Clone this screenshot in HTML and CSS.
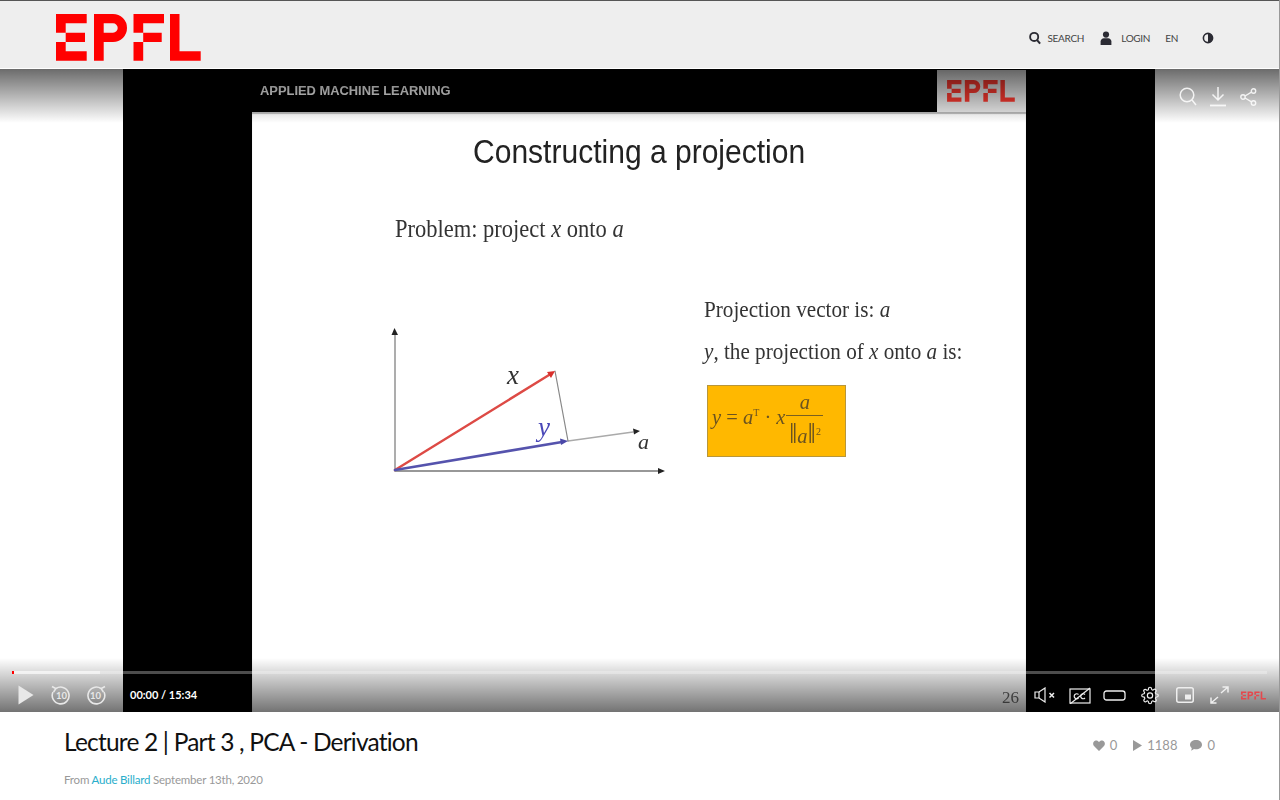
FILE: index.html
```html
<!DOCTYPE html>
<html lang="en">
<head>
    <meta charset="UTF-8">
    <meta name="viewport" content="width=device-width, initial-scale=1.0">
    <title>Lecture 2 | Part 3 , PCA - Derivation</title>
    <link rel="stylesheet" href="styles.css">
</head>
<body>
    <svg class="defs" width="0" height="0">
        <symbol id="epfl" viewBox="0 0 145 47">
            <path d="M0 0H30.7V9.3H9.7V18.7H0Z M9.7 18.7H29V28H9.7Z M0 28H9.7V37.3H30.7V46.7H0Z"/>
            <path fill-rule="evenodd" d="M38 0H57a14 14 0 0 1 0 28H47.7V46.7H38Z M47.7 9.3V18.7H57a4.7 4.7 0 0 0 0-9.4Z"/>
            <path d="M77.5 0H108V9.3H87.2V18.7H77.5Z M87.2 18.7H105.7V28H87.2Z M77.5 28H87.2V46.7H77.5Z"/>
            <path d="M114 0H123.5V37.3H144.7V46.7H114Z"/>
        </symbol>
    </svg>

    <div class="page">
        <header class="site-header">
            <svg class="site-logo"><use href="#epfl"/></svg>
            <nav class="site-nav">
                <a class="nav-item">
                    <svg class="nav-icon" viewBox="0 0 13 14"><circle cx="5.6" cy="5.8" r="4.4" fill="none" stroke="#2b2b33" stroke-width="2"/><path d="M8.8 9.2L12 13" stroke="#2b2b33" stroke-width="2.2" fill="none"/></svg>
                    SEARCH
                </a>
                <a class="nav-item nav-login">
                    <svg class="nav-icon" viewBox="0 0 12 14"><circle cx="6" cy="3.6" r="3.1" fill="#2b2b33"/><path d="M0.6 14V10.4C0.6 8.6 2.2 7.4 3.8 7.2H8.2C9.8 7.4 11.4 8.6 11.4 10.4V14Z" fill="#2b2b33"/></svg>
                    LOGIN
                </a>
                <a class="nav-item nav-lang">EN</a>
                <a class="nav-item nav-contrast">
                    <svg class="nav-icon" viewBox="0 0 12 12"><circle cx="6" cy="6" r="4.6" fill="#eee" stroke="#2b2b33" stroke-width="1.6"/><path d="M6 1.4A4.6 4.6 0 0 1 6 10.6Z" fill="#2b2b33"/></svg>
                </a>
            </nav>
        </header>

        <section class="player">
            <div class="video-frame">
                <div class="slide-strip-title">APPLIED MACHINE LEARNING</div>
                <div class="slide-strip-logo"><svg class="slide-logo"><use href="#epfl"/></svg></div>
                <div class="slide">
                    <h2 class="slide-title">Constructing a projection</h2>
                    <p class="slide-text slide-problem">Problem: project <i>x</i> onto <i>a</i></p>
                    <p class="slide-text slide-small slide-vector">Projection vector is: <i>a</i></p>
                    <p class="slide-text slide-small slide-proj"><i>y</i>, the projection of <i>x</i> onto <i>a</i> is:</p>
                    <div class="formula">
                        <span><i>y</i> = <i>a</i><sup>T</sup> &middot; <i>x</i></span>
                        <span class="fraction"><i class="frac-top">a</i><span class="frac-bottom"><span class="norm">&#8214;</span><i>a</i><span class="norm">&#8214;</span><sup>2</sup></span></span>
                    </div>
                    <svg class="diagram" viewBox="370 290 310 200">
                        <g fill="none" stroke-linecap="round">
                            <path d="M395 470V332" stroke="#999" stroke-width="1.6"/>
                            <path d="M395 471H659" stroke="#777" stroke-width="1.5"/>
                            <path d="M568 441L633 432" stroke="#aaa" stroke-width="1.5"/>
                            <path d="M555 371L568 441" stroke="#888" stroke-width="1.2"/>
                            <path d="M395 470L549 375" stroke="#dd4a45" stroke-width="2.4"/>
                            <path d="M395 470L562 442" stroke="#5553ad" stroke-width="2.6"/>
                        </g>
                        <path d="M394.5 328L391.5 335H398Z" fill="#222"/>
                        <path d="M665 471L658 468V474Z" fill="#222"/>
                        <path d="M640 431L633 428.5L634 434.5Z" fill="#222"/>
                        <path d="M555 371L547 372L551 378Z" fill="#d8302c"/>
                        <path d="M568 441L560 438.5L561 445Z" fill="#4a48a8"/>
                        <text class="diagram-label" x="507" y="384">x</text>
                        <text class="diagram-label diagram-blue" x="538" y="436">y</text>
                        <text class="diagram-label diagram-small" x="638" y="449">a</text>
                    </svg>
                    <span class="slide-number">26</span>
                </div>
            </div>

            <div class="shade shade-top"></div>
            <div class="shade shade-bottom"></div>

            <div class="player-top">
                <span class="ctrl">
                    <svg width="18" height="19" viewBox="0 0 18 19"><circle cx="8" cy="8" r="6.8" fill="none" stroke="#fff" stroke-width="1.5"/><path d="M13 13L17 18" stroke="#fff" stroke-width="1.5"/></svg>
                </span>
                <span class="ctrl">
                    <svg width="18" height="21" viewBox="0 0 18 21" fill="none" stroke="#fff" stroke-width="1.5"><path d="M9 1V14M3.5 8.5L9 14L14.5 8.5"/><path d="M1 19.5H17" stroke-width="1.8"/></svg>
                </span>
                <span class="ctrl">
                    <svg width="17" height="18" viewBox="0 0 17 18" fill="none" stroke="#fff" stroke-width="1.4"><circle cx="13.5" cy="3" r="2.2"/><circle cx="3" cy="9" r="2.2"/><circle cx="13.5" cy="15" r="2.2"/><path d="M5 8L11.5 4.1M5 10L11.5 13.9"/></svg>
                </span>
            </div>

            <div class="player-bar">
                <div class="progress">
                    <div class="progress-loaded"></div>
                    <div class="progress-played"></div>
                </div>
                <div class="controls">
                    <span class="ctrl">
                        <svg width="16" height="20" viewBox="0 0 16 20"><path d="M0.5 0.5L15.5 10L0.5 19.5Z" fill="#e8e8e8"/></svg>
                    </span>
                    <span class="ctrl">
                        <svg width="20" height="20" viewBox="0 0 20 20" fill="none" stroke="#e8e8e8" stroke-width="1.6"><path d="M5 3.5A8.4 8.4 0 1 1 2 7"/><path d="M1 1.5L4.8 3.6L2.6 7"/><text class="seek-label" x="10.5" y="13.5">10</text></svg>
                    </span>
                    <span class="ctrl">
                        <svg width="20" height="20" viewBox="0 0 20 20" fill="none" stroke="#e8e8e8" stroke-width="1.6"><path d="M15 3.5A8.4 8.4 0 1 0 18 7"/><path d="M19 1.5L15.2 3.6L17.4 7"/><text class="seek-label" x="9.5" y="13.5">10</text></svg>
                    </span>
                    <span class="time">00:00 / 15:34</span>
                    <span class="controls-right">
                        <span class="ctrl">
                            <svg width="22" height="16" viewBox="0 0 22 16" fill="none" stroke="#eee" stroke-width="1.2"><path d="M1 5H5L11 1V15L5 11H1Z"/><path d="M5 5V11"/><path d="M15.5 6L20 10.5M20 6L15.5 10.5" stroke-width="1.5"/></svg>
                        </span>
                        <span class="ctrl">
                            <svg width="22" height="17" viewBox="0 0 22 17" fill="none" stroke="#eee" stroke-width="1.2"><rect x="1" y="2" width="20" height="14"/><path d="M1 17L21 1"/><path d="M9.5 7.5A2.5 2.5 0 1 0 9.5 11M16 7.5A2.5 2.5 0 1 0 16 11"/></svg>
                        </span>
                        <span class="ctrl">
                            <svg width="23" height="11" viewBox="0 0 23 11" fill="none" stroke="#eee" stroke-width="1.3"><rect x="1" y="1" width="21" height="9" rx="2.5"/></svg>
                        </span>
                        <span class="ctrl">
                            <svg width="18" height="19" viewBox="0 0 24 24" fill="none" stroke="#eee" stroke-width="1.6"><circle cx="12" cy="12" r="3.5"/><path d="M19.4 15a1.65 1.65 0 0 0 .33 1.82l.06.06a2 2 0 1 1-2.83 2.83l-.06-.06a1.65 1.65 0 0 0-2.82 1.17V21a2 2 0 1 1-4 0v-.09a1.65 1.65 0 0 0-2.82-1.17l-.06.06a2 2 0 1 1-2.83-2.83l.06-.06A1.65 1.65 0 0 0 3.09 14H3a2 2 0 1 1 0-4h.09a1.65 1.65 0 0 0 1.17-2.82l-.06-.06a2 2 0 1 1 2.83-2.83l.06.06A1.65 1.65 0 0 0 10 3.09V3a2 2 0 1 1 4 0v.09a1.65 1.65 0 0 0 2.82 1.17l.06-.06a2 2 0 1 1 2.83 2.83l-.06.06A1.65 1.65 0 0 0 20.91 10H21a2 2 0 1 1 0 4h-.09a1.65 1.65 0 0 0-1.51 1Z"/></svg>
                        </span>
                        <span class="ctrl">
                            <svg width="18" height="16" viewBox="0 0 18 16"><rect x="0.75" y="0.75" width="16.5" height="14.5" rx="2" fill="none" stroke="#eee" stroke-width="1.5"/><rect x="9" y="7.5" width="6" height="5" fill="#eee"/></svg>
                        </span>
                        <span class="ctrl">
                            <svg width="19" height="18" viewBox="0 0 19 18" fill="none" stroke="#eee" stroke-width="1.5"><path d="M11 7L18 1M12.5 1H18V6.5"/><path d="M8 11L1 17M1 11.5V17H6.5"/></svg>
                        </span>
                        <svg class="bar-logo"><use href="#epfl"/></svg>
                    </span>
                </div>
            </div>
        </section>

        <section class="video-info">
            <div class="info-main">
                <h1 class="video-title">Lecture 2 | Part 3 , PCA - Derivation</h1>
                <p class="video-meta">From <a class="author">Aude Billard</a> September 13th, 2020</p>
            </div>
            <ul class="stats">
                <li class="stat stat-likes">
                    <svg width="12" height="11" viewBox="0 0 12 11"><path d="M6 11L1 6C-0.5 4.3 0 1.5 2 0.7C3.5 0 5 0.6 6 2C7 0.6 8.5 0 10 0.7C12 1.5 12.5 4.3 11 6Z" fill="#999"/></svg>
                    0
                </li>
                <li class="stat">
                    <svg width="9" height="11" viewBox="0 0 9 11"><path d="M0 0L9 5.5L0 11Z" fill="#999"/></svg>
                    1188
                </li>
                <li class="stat">
                    <svg width="12" height="11" viewBox="0 0 12 11"><path d="M6 0C9.3 0 12 2 12 4.7S9.3 9.3 6 9.3C5.3 9.3 4.7 9.2 4 9L1.2 10.8L1.8 8C0.7 7.2 0 6 0 4.7C0 2 2.7 0 6 0Z" fill="#999"/></svg>
                    0
                </li>
            </ul>
        </section>
    </div>
</body>
</html>
```

FILE: styles.css
```css
body {
    margin: 0;
    padding: 0;
    font-family: 'Lato', sans-serif;
    background-color: #fff;
    overflow: hidden;
}

.defs {
    position: absolute;
}

.page {
    height: 800px;
    border-right: 1px solid #999;
    overflow: hidden;
}

/* header */
.site-header {
    display: flex;
    align-items: center;
    justify-content: space-between;
    box-sizing: border-box;
    height: 69px;
    padding: 0 65px 0 56px;
    background-color: #eee;
    border-top: 1px solid #555;
    border-bottom: 1px solid #fff;
}

.site-logo {
    width: 145px;
    height: 47px;
    margin-top: 6px;
    fill: #f00;
}

.site-nav {
    display: flex;
    align-items: center;
    margin-top: 7px;
}

.nav-item {
    display: flex;
    align-items: center;
    gap: 6px;
    font-size: 10px;
    letter-spacing: -0.3px;
    color: #444;
}

.nav-icon {
    width: 12px;
    height: 14px;
}

.nav-login {
    margin-left: 16px;
    gap: 9px;
}

.nav-lang {
    margin-left: 15px;
}

.nav-contrast {
    margin-left: 24px;
}

/* video */
.player {
    position: relative;
    display: flex;
    justify-content: center;
    height: 643px;
    background-color: #fff;
}

.video-frame {
    position: relative;
    box-sizing: border-box;
    width: 1032px;
    height: 643px;
    margin-right: 1px;
    padding: 43px 129px 0;
    background-color: #000;
}

.slide-strip-title {
    position: absolute;
    left: 137px;
    top: 14px;
    font-family: 'Liberation Sans', sans-serif;
    font-size: 12.900px;
    font-weight: bold;
    color: #eee;
    filter: blur(0.4px);
}

.slide-strip-logo {
    position: absolute;
    right: 129px;
    top: 1px;
    display: flex;
    justify-content: center;
    align-items: center;
    width: 89px;
    height: 42px;
    padding-right: 2px;
    box-sizing: border-box;
    background: #eee;
}

.slide-logo {
    width: 68px;
    height: 22px;
    fill: #ff3a30;
    filter: blur(0.6px);
}

.slide {
    position: relative;
    height: 600px;
    background-color: #fff;
    box-shadow: inset 0 2px 1px #bbb;
}

.slide-title {
    position: absolute;
    left: 221px;
    top: 21px;
    margin: 0;
    font-family: 'Liberation Sans', sans-serif;
    font-size: 33px;
    font-weight: normal;
    color: #222;
    white-space: nowrap;
    transform: scaleX(0.91);
    transform-origin: left top;
    filter: blur(0.4px);
}

.slide-text {
    position: absolute;
    margin: 0;
    font-family: 'Liberation Serif', serif;
    font-size: 25px;
    color: #333;
    white-space: nowrap;
    transform: scaleX(0.9);
    transform-origin: left top;
    filter: blur(0.4px);
}

.slide-small {
    font-size: 23.500px;
}

.slide-problem {
    left: 143px;
    top: 103px;
}

.slide-vector {
    left: 452px;
    top: 184px;
}

.slide-proj {
    left: 452px;
    top: 226px;
}

.formula {
    position: absolute;
    left: 455px;
    top: 273px;
    display: flex;
    align-items: center;
    gap: 1px;
    box-sizing: border-box;
    width: 139px;
    height: 72px;
    padding: 0 0 8px 4px;
    background-color: #ffb800;
    border: 1px solid #b8963a;
    font-family: 'Liberation Serif', serif;
    font-size: 20.500px;
    color: #6b5320;
    white-space: nowrap;
    filter: blur(0.4px);
}

.formula sup {
    font-size: 10px;
    vertical-align: 8px;
    line-height: 0;
}

.fraction {
    display: flex;
    flex-direction: column;
    align-items: center;
    align-self: flex-start;
    width: 37px;
    margin-top: 4px;
}

.frac-top {
    padding-bottom: 1px;
    line-height: 24px;
}

.frac-bottom {
    width: 100%;
    padding-top: 4px;
    text-align: center;
    border-top: 1px solid #7a6020;
    line-height: 32px;
    white-space: nowrap;
}

.norm {
    font-size: 30px;
    line-height: 0;
}

.diagram {
    position: absolute;
    left: 118px;
    top: 178px;
    width: 310px;
    height: 200px;
    filter: blur(0.4px);
}

.diagram-label {
    font-family: 'Liberation Serif', serif;
    font-size: 27px;
    font-style: italic;
    fill: #333;
}

.diagram-blue {
    fill: #4a48b8;
}

.diagram-small {
    font-size: 22px;
}

.slide-number {
    position: absolute;
    right: 7px;
    bottom: 4px;
    font-family: 'Liberation Serif', serif;
    font-size: 17px;
    color: #666;
    filter: blur(0.4px);
}

/* overlays on the video */
.shade {
    position: absolute;
    left: 0;
    right: 0;
}

.shade-top {
    top: 0;
    height: 54px;
    background: linear-gradient(rgba(0, 0, 0, 0.58), rgba(0, 0, 0, 0));
}

.shade-bottom {
    bottom: 0;
    height: 54px;
    background: linear-gradient(rgba(0, 0, 0, 0), rgba(0, 0, 0, 0.55));
}

.player-top {
    position: absolute;
    top: 17px;
    right: 16px;
    display: flex;
}

.ctrl {
    display: flex;
    justify-content: center;
    align-items: center;
}

.player-top .ctrl {
    width: 30px;
    height: 21px;
    opacity: 0.85;
}

.player-bar {
    position: absolute;
    left: 0;
    right: 0;
    bottom: 0;
    height: 41px;
}

.progress {
    position: relative;
    height: 3px;
    margin: 0 12px;
    background-color: rgba(255, 255, 255, 0.3);
}

.progress-loaded {
    width: 88px;
    height: 100%;
    background-color: rgba(255, 255, 255, 0.5);
}

.progress-played {
    position: absolute;
    left: 0;
    top: 0;
    width: 2px;
    height: 100%;
    background-color: #f00;
}

.controls {
    display: flex;
    align-items: center;
    height: 38px;
    padding: 4px 13px 0 8px;
    box-sizing: border-box;
}

.controls .ctrl {
    width: 35px;
    height: 24px;
}

.seek-label {
    font-family: 'Lato', sans-serif;
    font-size: 9.500px;
    font-weight: bold;
    fill: #e8e8e8;
    stroke: none;
    text-anchor: middle;
}

.time {
    margin: 0 0 2px 17px;
    font-size: 11px;
    font-weight: bold;
    color: #fff;
}

.controls-right {
    display: flex;
    align-items: center;
    margin-left: auto;
}

.bar-logo {
    width: 25px;
    height: 9px;
    margin-left: 4px;
    fill: #e5484d;
}

/* below the video */
.video-info {
    display: flex;
    justify-content: space-between;
    padding: 0 64px;
}

.video-title {
    margin: 14px 0 0;
    font-size: 24.500px;
    font-weight: 400;
    letter-spacing: -0.8px;
    line-height: 32px;
    color: #111;
}

.video-meta {
    margin: 14px 0 0;
    font-size: 11.500px;
    letter-spacing: -0.2px;
    line-height: 16px;
    color: #999;
}

.author {
    color: #2aaecb;
}

.stats {
    display: flex;
    gap: 13px;
    margin: 25px 0 0;
    padding: 0;
    list-style: none;
}

.stat {
    display: flex;
    align-items: center;
    gap: 5px;
    height: 16px;
    font-size: 13px;
    color: #999;
}

.stat-likes {
    margin-right: 3px;
}
```
